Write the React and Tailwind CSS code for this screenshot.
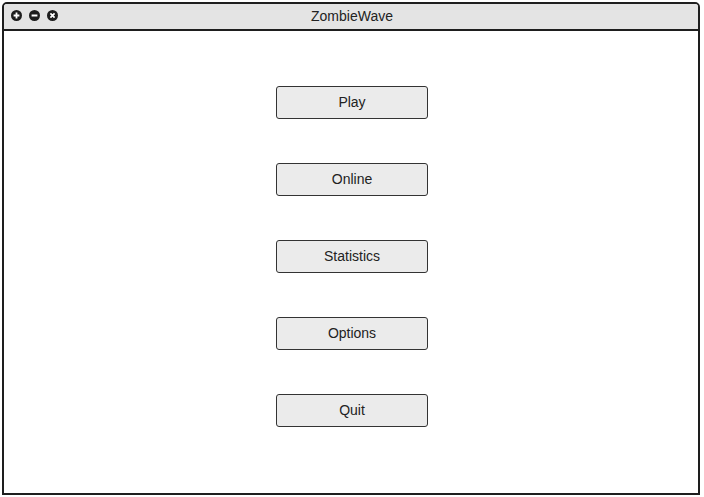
import React from 'react';

const WindowIcon = ({ kind }) => (
  <svg width="11" height="11" viewBox="0 0 11 11">
    <circle cx="5.5" cy="5.5" r="5.5" fill="#1e1e1e" />
    {kind === 'plus' && (
      <path d="M5.5 2.6v5.8M2.6 5.5h5.8" stroke="#fff" strokeWidth="1.8" />
    )}
    {kind === 'minus' && <path d="M2.6 5.5h5.8" stroke="#fff" strokeWidth="1.8" />}
    {kind === 'close' && (
      <path d="M3.4 3.4l4.2 4.2M7.6 3.4l-4.2 4.2" stroke="#fff" strokeWidth="1.7" />
    )}
  </svg>
);

const MenuButton = ({ label }) => (
  <button className="w-[152px] h-[33px] bg-[#ebebeb] border border-[#333] rounded-[3px] text-[14px] text-[#222]">
    {label}
  </button>
);

const App = () => {
  const items = ['Play', 'Online', 'Statistics', 'Options', 'Quit'];

  return (
    <div className="w-[704px] h-[497px] bg-white pt-[2px] pl-[2px]" style={{ fontFamily: '"Liberation Sans", Arial, sans-serif' }}>
      <div className="w-[698px] h-[493px] border-2 border-[#1e1e1e] rounded-t-[5px] flex flex-col overflow-hidden">
        {/* title bar */}
        <div className="relative h-[27px] shrink-0 bg-[#e4e4e4] border-b-2 border-[#1e1e1e] flex items-center justify-center pl-[2px]">
          <div className="absolute left-[7px] top-[6px] flex gap-[7px]">
            <WindowIcon kind="plus" />
            <WindowIcon kind="minus" />
            <WindowIcon kind="close" />
          </div>
          <span className="text-[14px] text-[#222]">ZombieWave</span>
        </div>

        <div className="flex-1 flex flex-col items-center pt-[55px] pl-[2px] gap-[44px]">
          {items.map((item) => (
            <MenuButton key={item} label={item} />
          ))}
        </div>
      </div>
    </div>
  );
};

export default App;
